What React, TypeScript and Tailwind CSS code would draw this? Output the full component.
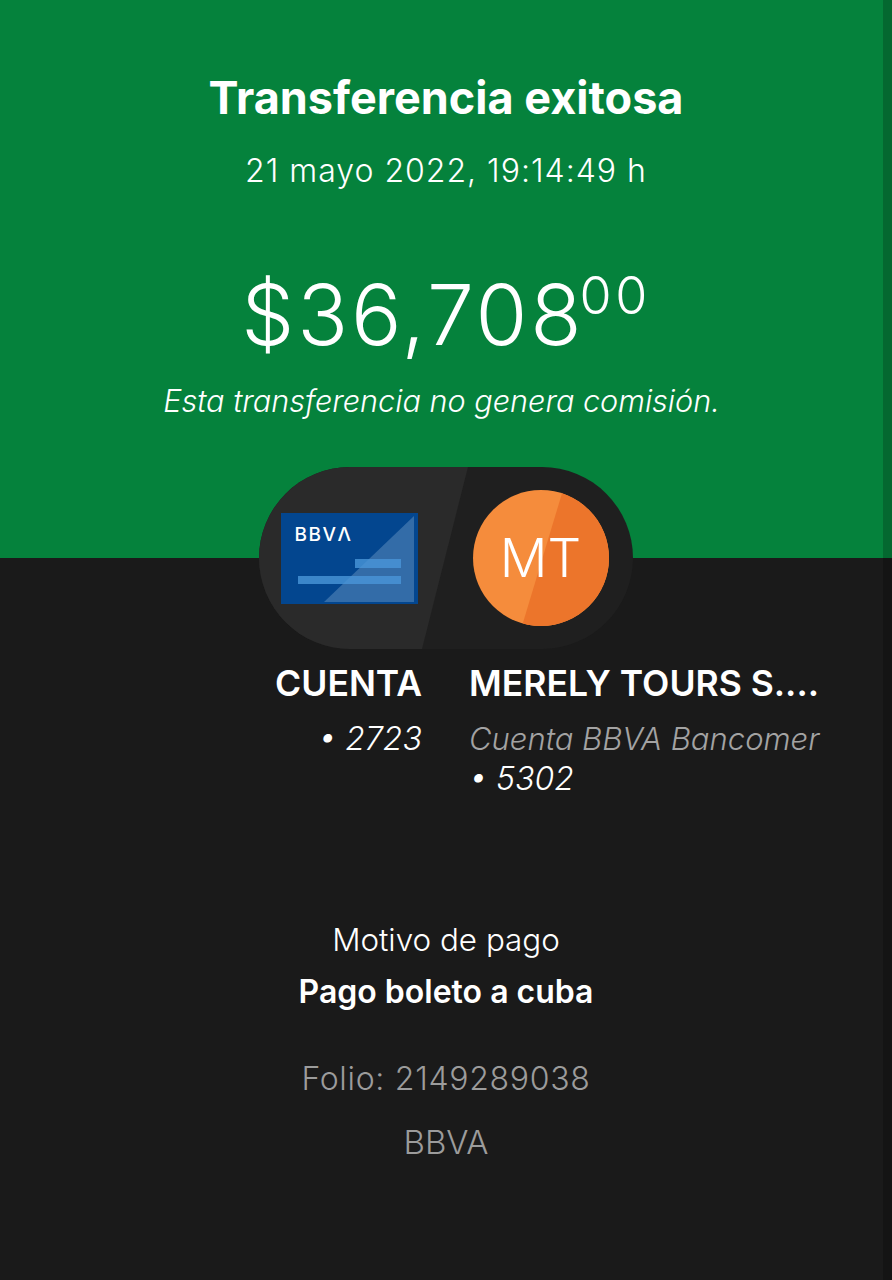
const font = { fontFamily: 'Inter, sans-serif' };

const CardLogo = () => (
  <div className="relative h-[91px] w-[137px] shrink-0 overflow-hidden bg-[#03468f]">
    <svg className="absolute inset-0" width="137" height="91" viewBox="0 0 137 91">
      <path d="M43 89L133 3V89Z" fill="#7ea6cc" fillOpacity="0.4" />
      <rect x="74" y="46" width="46" height="9" fill="#4a96d8" fillOpacity="0.8" />
      <rect x="17" y="63" width="103" height="8" fill="#4a96d8" fillOpacity="0.8" />
    </svg>
    <span className="absolute left-[14px] top-[11px] text-[19px] leading-[22px] font-medium tracking-[1.5px] text-white">
      BBVΛ
    </span>
  </div>
);

const Avatar = () => (
  <div className="relative flex h-[136px] w-[136px] shrink-0 items-center justify-center overflow-hidden rounded-full bg-[#f58c3c]">
    <svg className="absolute inset-0" width="136" height="136" viewBox="0 0 136 136">
      <path d="M90 0H136V136H49Z" fill="#ec752b" />
    </svg>
    <span className="relative text-[53px] leading-none font-light text-white">MT</span>
  </div>
);

export default function App() {
  return (
    <div className="relative min-h-[1280px] w-[892px] overflow-hidden bg-[#1a1a1a] text-white" style={font}>
      {/* Green header */}
      <section className="flex h-[558px] flex-col items-center bg-[#05823c] pt-[70px]">
        <h1 className="text-[45px] leading-[56px] font-bold">Transferencia exitosa</h1>
        <p className="mt-[25px] text-[32px] leading-[40px] font-light tracking-[1px]">21 mayo 2022, 19:14:49 h</p>
        <div className="mt-[74px] flex items-start font-light">
          <span className="text-[84px] leading-[100px] tracking-[2.9px]">$36,708</span>
          <span className="mt-[-4px] ml-[-5px] text-[52px] leading-[70px] tracking-[3.5px]">00</span>
        </div>
        <p className="mt-[16px] pr-[9px] text-[30.6px] leading-[40px] font-light italic">
          Esta transferencia no genera comisión.
        </p>
      </section>

      {/* Account pill */}
      <div className="mt-[-91px] flex justify-center pr-[1px]">
        <div className="relative flex h-[182px] w-[374px] items-center overflow-hidden rounded-full bg-[#1f1f1f] pl-[22px]">
          <svg className="absolute inset-0" width="374" height="182" viewBox="0 0 374 182">
            <path d="M0 0H209L163 182H0Z" fill="#2a2a2a" />
          </svg>
          <div className="relative flex items-center gap-[55px]">
            <CardLogo />
            <Avatar />
          </div>
        </div>
      </div>

      {/* Origin and destination */}
      <div className="mt-[15px] flex gap-[47px]">
        <div className="w-[422px] text-right">
          <p className="text-[35.5px] leading-[40px] font-semibold">CUENTA</p>
          <p className="mt-[15px] text-[32px] leading-[40px] font-light italic">• 2723</p>
        </div>
        <div className="w-[373px] whitespace-nowrap">
          <p className="text-[35.5px] leading-[40px] font-semibold">MERELY TOURS S....</p>
          <p className="mt-[15px] text-[31px] leading-[40px] font-light text-[#a3a3a3] italic">Cuenta BBVA Bancomer</p>
          <p className="text-[32px] leading-[40px] font-light italic">• 5302</p>
        </div>
      </div>

      {/* Details */}
      <div className="mt-[121px] flex flex-col items-center">
        <p className="text-[31.4px] leading-[40px] font-light">Motivo de pago</p>
        <p className="mt-[12px] text-[32px] leading-[40px] font-semibold">Pago boleto a cuba</p>
        <p className="mt-[47px] text-[32px] leading-[40px] font-light tracking-[0.7px] text-[#9c9c9c]">Folio: 2149289038</p>
        <p className="mt-[23px] text-[33px] leading-[40px] font-light text-[#9c9c9c]">BBVA</p>
      </div>

      {/* Scrollbar edge */}
      <div className="absolute top-0 right-0 bottom-0 w-[9px] bg-black/20" />
    </div>
  );
}
